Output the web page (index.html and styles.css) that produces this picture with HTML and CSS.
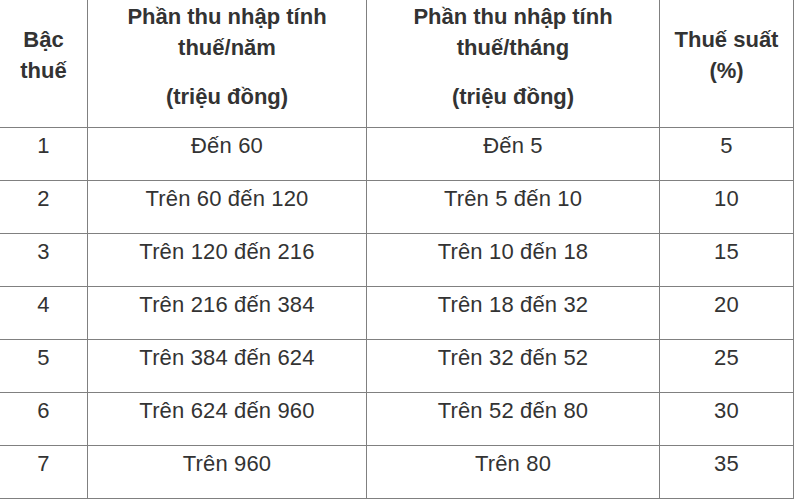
FILE: index.html
```html
<!DOCTYPE html>
<html lang="vi">
<head>
<meta charset="utf-8">
<title>Biểu thuế lũy tiến từng phần</title>
<link rel="stylesheet" href="styles.css">
</head>
<body>
<table class="tax">
  <colgroup>
    <col class="c1"><col class="c2"><col class="c3"><col class="c4">
  </colgroup>
  <thead>
    <tr class="head">
      <th class="short"><p>Bậc<br>thuế</p></th>
      <th class="long"><p>Phần thu nhập tính<br>thuế/năm</p><p class="unit">(triệu đồng)</p></th>
      <th class="long"><p>Phần thu nhập tính<br>thuế/tháng</p><p class="unit">(triệu đồng)</p></th>
      <th class="short"><p>Thuế suất<br>(%)</p></th>
    </tr>
  </thead>
  <tbody>
    <tr><td>1</td><td>Đến 60</td><td>Đến 5</td><td>5</td></tr>
    <tr><td>2</td><td>Trên 60 đến 120</td><td>Trên 5 đến 10</td><td>10</td></tr>
    <tr><td>3</td><td>Trên 120 đến 216</td><td>Trên 10 đến 18</td><td>15</td></tr>
    <tr><td>4</td><td>Trên 216 đến 384</td><td>Trên 18 đến 32</td><td>20</td></tr>
    <tr><td>5</td><td>Trên 384 đến 624</td><td>Trên 32 đến 52</td><td>25</td></tr>
    <tr><td>6</td><td>Trên 624 đến 960</td><td>Trên 52 đến 80</td><td>30</td></tr>
    <tr><td>7</td><td>Trên 960</td><td>Trên 80</td><td>35</td></tr>
  </tbody>
</table>
</body>
</html>
```
FILE: styles.css
```css
html, body {
  margin: 0;
  background: #ffffff;
}
body {
  font-family: "Liberation Sans", Arial, Helvetica, sans-serif;
  color: #333333;
}
.tax {
  border-collapse: collapse;
  table-layout: fixed;
  width: 794px;
  margin: -1px 0 0 -1px;
}
.c1 { width: 88px; }
.c2 { width: 279px; }
.c3 { width: 293px; }
.c4 { width: 134px; }
.tax th,
.tax td {
  border: 1px solid #808080;
  text-align: center;
  vertical-align: top;
  padding: 0 4px;
  font-size: 22px;
  line-height: 31px;
}
.tax th {
  font-weight: bold;
  height: 128px;
  box-sizing: border-box;
}
.tax p {
  margin: 0;
}
.tax th.short {
  padding-top: 24px;
}
.tax th.long {
  padding-top: 1px;
}
.tax .unit {
  margin-top: 18px;
}
.tax td {
  height: 53px;
  box-sizing: border-box;
  padding-top: 2px;
  letter-spacing: 0.15px;
}
```
